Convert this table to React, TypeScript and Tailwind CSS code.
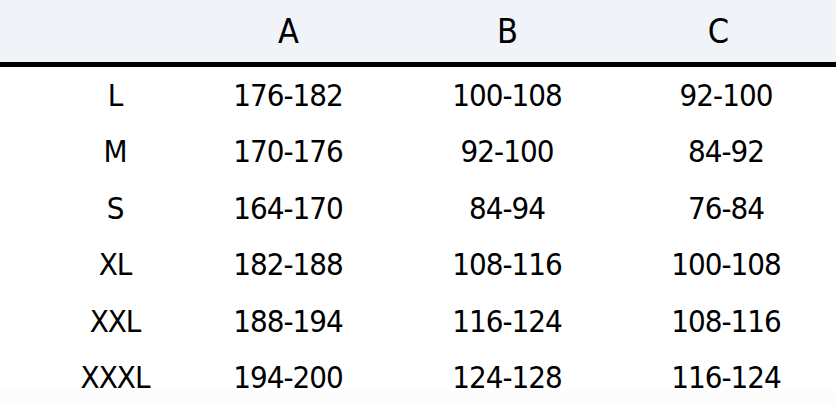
import React from "react";

const rows = [
  ["L", "176-182", "100-108", "92-100"],
  ["M", "170-176", "92-100", "84-92"],
  ["S", "164-170", "84-94", "76-84"],
  ["XL", "182-188", "108-116", "100-108"],
  ["XXL", "188-194", "116-124", "108-116"],
  ["XXXL", "194-200", "124-128", "116-124"],
];

export default function App() {
  return (
    <div
      className="w-[836px] h-[406px] overflow-hidden bg-white text-black"
      style={{ fontFamily: '"DejaVu Sans Condensed", "DejaVu Sans", sans-serif' }}
    >
      <div className="grid grid-cols-[230px_116px_322px_116px_1fr] h-[67px] bg-[#f0f4f8] border-b-[5px] border-black items-center text-[34px] leading-none tracking-[-1px]">
        <div />
        <div className="text-center">A</div>
        <div className="text-center">B</div>
        <div className="text-center pr-4">C</div>
        <div />
      </div>
      {rows.map((r, idx) => (
        <div
          key={r[0]}
          className={
            idx === rows.length - 1
              ? "grid grid-cols-[230px_116px_322px_116px_1fr] h-[56.5px] items-center text-[31px] leading-none tracking-[-1px] bg-[linear-gradient(to_bottom,#ffffff_40px,#fcfcfc_40px)]"
              : "grid grid-cols-[230px_116px_322px_116px_1fr] h-[56.5px] items-center text-[31px] leading-none tracking-[-1px]"
          }
        >
          {r.map((c, i) => (
            <div key={i} className="text-center whitespace-nowrap">
              {c}
            </div>
          ))}
          <div />
        </div>
      ))}
    </div>
  );
}
